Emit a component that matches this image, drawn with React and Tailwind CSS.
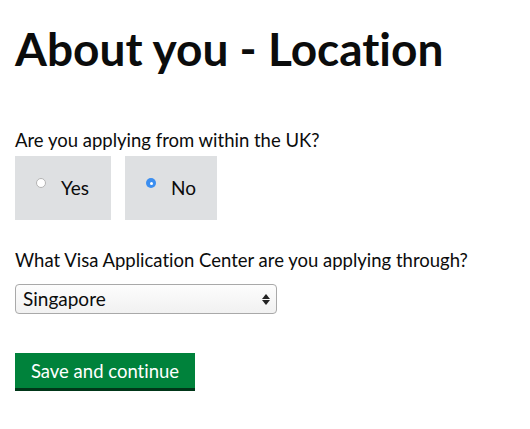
const FONT = { fontFamily: 'Lato, "Noto Sans", Arial, sans-serif' }

function Radio({ checked }) {
  return checked ? (
    <span className="grid h-[10px] w-[10px] place-items-center rounded-full bg-[#3b8ef0]">
      <span className="h-[3px] w-[3px] rounded-full bg-white" />
    </span>
  ) : (
    <span className="block h-[10px] w-[10px] rounded-full border border-[#b4b4b4] bg-white" />
  )
}

function Choice({ label, checked, width }) {
  return (
    <label className={`flex h-[64px] items-center gap-[15px] bg-[#dee0e2] pl-[21px] ${width}`}>
      <span className="flex -translate-y-[5px]">
        <Radio checked={checked} />
      </span>
      <span className="text-[19px] leading-[24px]">{label}</span>
    </label>
  )
}

export default function App() {
  return (
    <div className="min-h-[429px] bg-white pl-[15px] text-[#0b0c0c] [font-variant-ligatures:none]" style={FONT}>
      <h1 className="pt-[22px] text-[46px] font-bold leading-[54px]">About you - Location</h1>

      <p className="mt-[52px] text-[18.5px] leading-[24px]">Are you applying from within the UK?</p>
      <div className="mt-[4px] flex gap-[14px]">
        <Choice label="Yes" width="w-[96px]" />
        <Choice label="No" checked width="w-[92px]" />
      </div>

      <p className="mt-[28px] text-[18.5px] leading-[24px]">What Visa Application Center are you applying through?</p>
      <div className="mt-[12px] flex h-[30px] w-[262px] items-center justify-between rounded-[4px] border border-[#a9a9a9] bg-gradient-to-b from-[#fdfdfd] to-[#f1f1f1] pl-[7px] pr-[6px]">
        <span className="text-[19px] leading-[20px]">Singapore</span>
        <span className="flex flex-col items-center gap-[1px]">
          <span className="h-0 w-0 border-x-[4px] border-b-[5px] border-x-transparent border-b-[#222]" />
          <span className="h-0 w-0 border-x-[4px] border-t-[5px] border-x-transparent border-t-[#222]" />
        </span>
      </div>

      <button className="mt-[39px] h-[38px] w-[180px] border-b-[3px] border-[#003618] bg-[#00823b] text-[18.5px] leading-[24px] text-white">
        Save and continue
      </button>
    </div>
  )
}
